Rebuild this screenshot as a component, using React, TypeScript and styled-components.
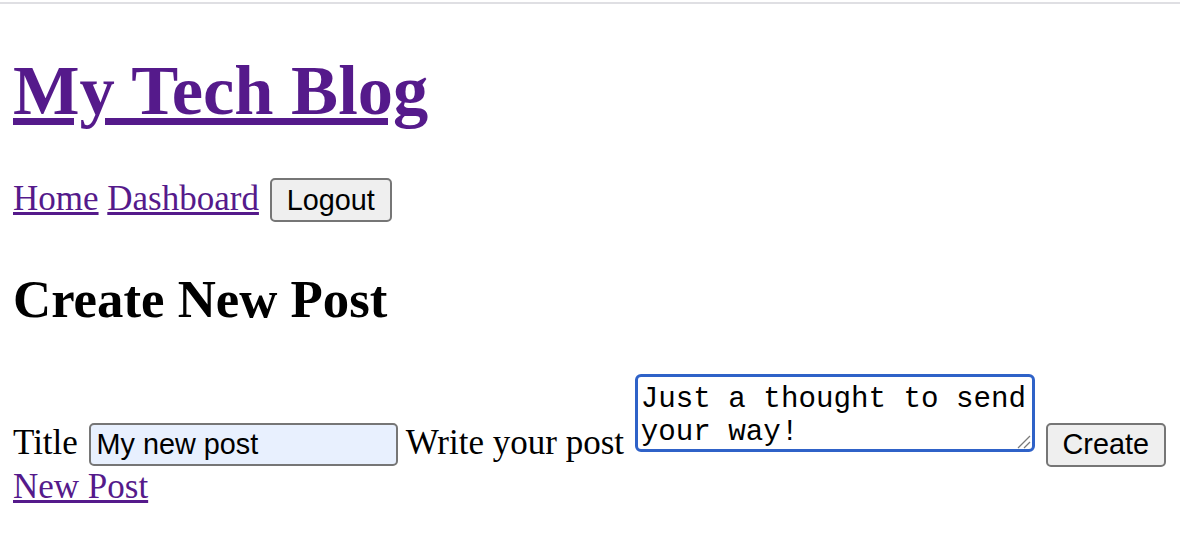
import React from "react";
import styled, { createGlobalStyle } from "styled-components";

const GlobalStyle = createGlobalStyle`
  html, body {
    margin: 0;
    padding: 0;
    background: #ffffff;
  }
  body {
    font-family: "Liberation Serif", "Times New Roman", serif;
    font-size: 35px;
    color: #000000;
  }
`;

const Page = styled.div`
  margin-top: 2px;
  border-top: 2px solid #dfdfe3;
  padding: 0 13px;
`;

const SiteTitle = styled.h1`
  font-size: 70.5px;
  line-height: 80px;
  font-weight: 700;
  margin: 46px 0 48px;
`;

const Link = styled.a`
  color: #551a8b;
  text-decoration: underline;
  cursor: pointer;
`;

const Nav = styled.nav`
  display: block;
  margin: 0;
`;

const Button = styled.button`
  font-family: "Liberation Sans", Arial, sans-serif;
  font-size: 28.8px;
  line-height: normal;
  color: #000000;
  background: #efefef;
  border: 2px solid #767676;
  border-radius: 5px;
  padding: 3.5px 15px;
  margin: 0 0 0 2px;
  vertical-align: baseline;
`;

const Heading = styled.h2`
  font-size: 52.8px;
  line-height: 60px;
  font-weight: 700;
  margin: 46.5px 0 45.5px;
`;

const PostForm = styled.form`
  margin: 0;
`;

const FieldLabel = styled.label`
  font: inherit;
`;

const TitleInput = styled.input`
  box-sizing: border-box;
  width: 309px;
  font-family: "Liberation Sans", Arial, sans-serif;
  font-size: 28.8px;
  line-height: normal;
  color: #000000;
  background: #e8f0fe;
  border: 2px solid #767676;
  border-radius: 5px;
  padding: 3px 6px;
  margin: 0 0 0 2px;
  outline: none;
`;

const AreaWrap = styled.span`
  position: relative;
  display: inline-block;
  line-height: 0;
  margin: 0 0 0 2px;
`;

const PostArea = styled.textarea`
  display: inline-block;
  box-sizing: border-box;
  width: 400px;
  height: 78px;
  font-family: "Liberation Mono", "Courier New", monospace;
  font-size: 29.2px;
  line-height: normal;
  color: #000000;
  background: #ffffff;
  border: 3px solid #2f62c8;
  border-radius: 6px;
  padding: 6px 3px 3px 3px;
  margin: 0 0 2px 0;
  outline: none;
  resize: none;
  overflow: hidden;
  vertical-align: baseline;
`;

const Grip = styled.svg`
  position: absolute;
  right: 4px;
  bottom: 5px;
  width: 14px;
  height: 14px;
  pointer-events: none;
`;

export default function App() {
  return (
    <>
      <GlobalStyle />
      <Page>
        <SiteTitle>
          <Link href="#">My Tech Blog</Link>
        </SiteTitle>
        <Nav>
          <Link href="#">Home</Link> <Link href="#">Dashboard</Link>{" "}
          <Button type="button">Logout</Button>
        </Nav>
        <Heading>Create New Post</Heading>
        <PostForm onSubmit={(e) => e.preventDefault()}>
          <FieldLabel htmlFor="post-title">Title</FieldLabel>{" "}
          <TitleInput id="post-title" type="text" defaultValue="My new post" />{" "}
          <FieldLabel htmlFor="post-body">Write your post</FieldLabel>{" "}
          <AreaWrap>
            <PostArea id="post-body" defaultValue="Just a thought to send your way!" />
            <Grip viewBox="0 0 14 14" aria-hidden="true">
              <line x1="13" y1="1" x2="1" y2="13" stroke="#7a7a7a" strokeWidth="1.3" />
              <line x1="13" y1="7" x2="7" y2="13" stroke="#7a7a7a" strokeWidth="1.3" />
            </Grip>
          </AreaWrap>{" "}
          <Button type="submit">Create</Button>
        </PostForm>
        <Link href="#">New Post</Link>
      </Page>
    </>
  );
}
